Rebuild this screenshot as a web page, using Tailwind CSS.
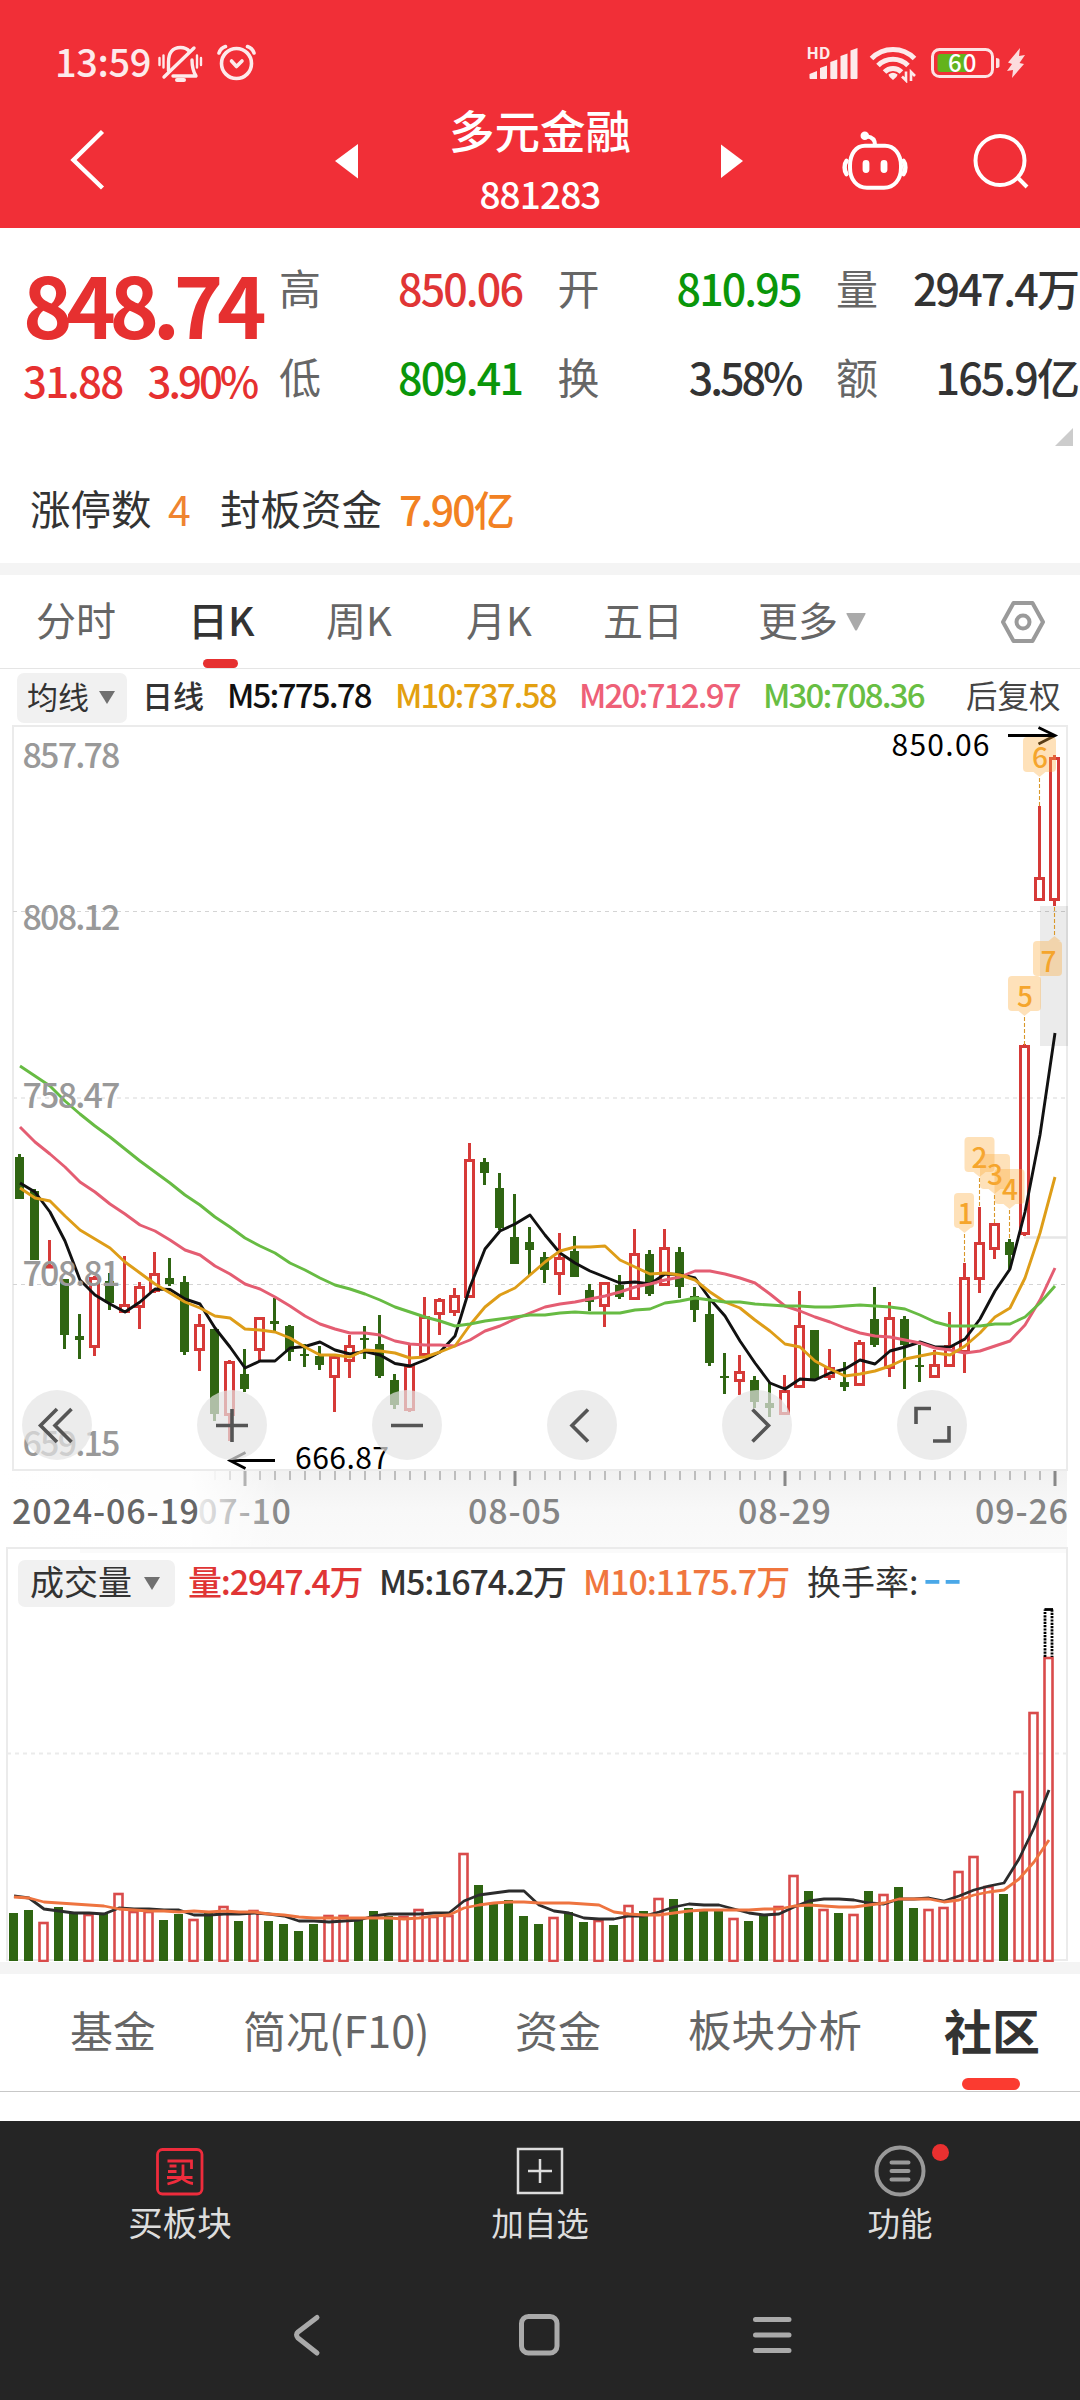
<!DOCTYPE html>
<html lang="zh-CN">
<head>
<meta charset="utf-8">
<title>多元金融 881283</title>
<script src="https://cdn.jsdelivr.net/npm/@tailwindcss/browser@4"></script>
</head>
<body class="w-[1080px] h-[2400px] overflow-hidden bg-white font-['Noto_Sans_CJK_SC',sans-serif] text-[#333] whitespace-nowrap">

<header class="h-[228px] bg-[#f12f37] text-white flex flex-col">
  <div class="h-[100px] pt-[22px] flex items-center">
    <span class="ml-[55px] w-[97px] text-[38px] font-medium leading-none tracking-[-0.400px] opacity-90">13:59</span>
    <svg class="ml-[4px] opacity-90" width="48" height="44" viewBox="156 39 48 44" fill="none" stroke="#fff" stroke-width="3.400" stroke-linecap="round" stroke-linejoin="round">
      <path d="M168.500 70.500V62c0-9 4-14.500 12-14.500 4 0 7 1.500 9 4"/><path d="M192 60c0 7 1.500 12 4 16H173"/><path d="M194 48L164 77"/><path d="M177 80h7" stroke-width="4"/><path d="M159.500 58v7M163.500 55.500v12M197 55.500v12M201 58v7" stroke-width="2.400"/>
    </svg>
    <svg class="ml-[10px] opacity-90" width="44" height="44" viewBox="214 39 44 44" fill="none" stroke="#fff" stroke-width="3.600" stroke-linecap="round" stroke-linejoin="round">
      <circle cx="236.500" cy="63.500" r="15"/><path d="M219 53c1-3 3.500-5.500 6.500-6.500M254 53c-1-3-3.500-5.500-6.500-6.500"/><path d="M231.500 61l5 5.500 5.500-5.500"/>
    </svg>
    <svg class="ml-[542px] opacity-90" width="60" height="44" viewBox="800 39 60 44" fill="#fff">
      <text x="806.500" y="58.500" font-size="15.500" font-weight="700" textLength="24" lengthAdjust="spacingAndGlyphs">HD</text>
      <path d="M809.500 74l7.500-3v8h-6.500q-1 0-1-1zM820 68l7-2.500v12.500q0 1-1 1h-5q-1 0-1-1zM830.300 62l7-2.500v18.500q0 1-1 1h-5q-1 0-1-1zM840.500 56l7-2.500v24.500q0 1-1 1h-5q-1 0-1-1zM850.500 50.500l7-2.500v30q0 1-1 1h-5q-1 0-1-1z"/>
    </svg>
    <svg class="ml-[8px] opacity-90" width="52" height="44" viewBox="868 39 52 44" fill="none" stroke="#fff" stroke-width="5">
      <path d="M871.500 58.500a30 30 0 0 1 43 0M878 65.500a21 21 0 0 1 30 0M884.500 72a12 12 0 0 1 17 0"/><path d="M888.500 74.500q4.500-3.500 9 0q0 2-4.500 5.500q-4.500-3.500-4.500-5.500z" fill="#fff" stroke="none"/><path d="M906 71.500v9l-4-4M911 81v-9l4 4" stroke-width="2.600"/>
    </svg>
    <svg class="ml-[10px]" width="72" height="44" viewBox="930 39 72 44">
      <rect x="932.500" y="49.500" width="60" height="27" rx="7" fill="none" stroke="#fde3e4" stroke-width="3"/><path d="M940.500 54h26v18h-26a3 3 0 0 1-3-3V57a3 3 0 0 1 3-3z" fill="#63b31c"/><path d="M996 58q3.500 0 3.500 2v6q0 2-3.500 2z" fill="#fde3e4"/>
      <text x="948" y="72" font-size="24" font-weight="500" fill="#fff" textLength="28.500">60</text>
    </svg>
    <svg class="ml-[4px]" width="22" height="44" viewBox="1006 39 22 44"><path d="M1020 48l-12 14.500 4 1.500-5 7 6-1-1 8 12-14-4.500-1 5.500-8-6 1z" fill="#fcdcdd"/></svg>
  </div>
  <div class="h-[128px] flex items-start">
    <svg class="ml-[60px] mt-[20px]" width="56" height="80" viewBox="60 120 56 80" fill="none" stroke="#fff" stroke-width="4.400"><path d="M102.500 131.500L73.500 160l29 28"/></svg>
    <svg class="ml-[214px] mt-[20px]" width="32" height="80" viewBox="330 120 32 80" fill="#fff"><path d="M358 144v34.500L335 161z"/></svg>
    <div class="ml-[58px] w-[240px] flex flex-col gap-[12px] text-center">
      <h1 class="h-[56px] leading-[58px] text-[45.500px] font-medium">多元金融</h1>
      <p class="h-[50px] leading-[50px] text-[37px] font-medium tracking-[-0.900px]">881283</p>
    </div>
    <svg class="ml-[56px] mt-[20px]" width="32" height="80" viewBox="716 120 32 80" fill="#fff"><path d="M721 144.500v33.500l22-17z"/></svg>
    <svg class="ml-[90px] mt-[20px]" width="74" height="80" viewBox="838 120 74 80" fill="none" stroke="#fff" stroke-width="4" stroke-linecap="round">
      <path d="M865 145.800h20c9 0 16 8 16 20v2c0 12-7 20-17 20h-17c-10 0-17-8-17-20v-2c0-12 6-20 15-20z"/><path d="M846.500 161c-2.500 3-2.500 10 0 13M903.500 161c2.500 3 2.500 10 0 13" stroke-width="4.500"/><path d="M875 145c0-5.500-2.500-8-8-8.500"/><circle cx="864.800" cy="135.800" r="3" fill="#fff" stroke-width="2.500"/><path d="M866 163.500v6M884 163.500v6" stroke-width="6.800"/>
    </svg>
    <svg class="ml-[56px] mt-[20px]" width="64" height="80" viewBox="968 120 64 80" fill="none" stroke="#fff" stroke-width="4"><circle cx="1000" cy="160.500" r="24.500"/><path d="M1017 177l10 10"/></svg>
  </div>
</header>

<section class="h-[250px] flex">
  <div class="w-[279px] pt-[25px] pl-[23px] text-[#e63030]">
    <p class="h-[100px] leading-[100px] text-[84px] font-bold tracking-[-6.300px]">848.74</p>
    <p class="h-[53px] leading-[53px] text-[42px] font-medium tracking-[-1.800px] flex"><span class="w-[124.500px]">31.88</span><span class="tracking-[-3px]">3.90%</span></p>
  </div>
  <div class="pt-[29px] w-[801px] flex flex-col">
    <div class="grid grid-cols-3 gap-x-[34.500px] gap-y-[29px] text-[42px] leading-[60px]">
      <div class="flex justify-between text-[#666]"><span>高</span><span class="pr-[1px] text-[43px] font-medium tracking-[-1.900px] text-[#e03535]">850.06</span></div>
      <div class="flex justify-between text-[#666]"><span>开</span><span class="pr-[1px] text-[43px] font-medium tracking-[-1.900px] text-[#0a960a]">810.95</span></div>
      <div class="flex justify-between text-[#666]"><span>量</span><span class="pr-[2px] text-[43px] font-medium tracking-[-1.900px] text-[#333]">2947.4万</span></div>
      <div class="flex justify-between text-[#666]"><span>低</span><span class="pr-[1px] text-[43px] font-medium tracking-[-1.900px] text-[#0a960a]">809.41</span></div>
      <div class="flex justify-between text-[#666]"><span>换</span><span class="pr-[1px] text-[43px] font-medium tracking-[-3px] text-[#333]">3.58%</span></div>
      <div class="flex justify-between text-[#666]"><span>额</span><span class="pr-[2px] text-[43px] font-medium tracking-[-1.900px] text-[#333]">165.9亿</span></div>
    </div>
    <svg class="self-end mr-[7px] mt-[22px]" width="18" height="18" fill="#ccc"><path d="M18 0v18H0z"/></svg>
  </div>
</section>
<section class="h-[85px] text-[40.500px] leading-[60px] flex">
  <span class="ml-[30px] w-[121px]">涨停数</span><span class="ml-[17px] w-[23px] text-[41px] text-[#ef8430]">4</span>
  <span class="ml-[29px] w-[162px]">封板资金</span><span class="ml-[17px] text-[41px] font-medium tracking-[-1.900px] text-[#f28122]">7.90亿</span>
</section>
<div class="h-[12px] bg-[#f4f4f4]"></div>

<nav class="h-[94px] pb-[5px] border-b border-[#e5e5e5] flex items-center text-[40px] leading-none text-[#666]">
  <span class="ml-[36px]">分时</span>
  <span class="ml-[72px] w-[66px] relative text-[#333] font-medium">日K<i class="absolute left-[15px] top-[60px] w-[35px] h-[9px] rounded-[5px] bg-[#e63030]"></i></span>
  <span class="ml-[72px] w-[66px]">周K</span>
  <span class="ml-[74px] w-[66px]">月K</span>
  <span class="ml-[71px]">五日</span>
  <span class="ml-[75px]">更多</span>
  <svg class="ml-[8px] mt-[5px]" width="20" height="18" fill="#aaa"><path d="M1 0h18q1 0 .5 1L11 17q-1 1-2 0L.5 1Q0 0 1 0z"/></svg>
  <svg class="ml-[134px] mt-[5px]" width="46" height="46" viewBox="0 0 46 46" fill="none" stroke="#9a9a9a" stroke-width="4" stroke-linejoin="round"><path d="M13.500 4h19L43 23 32.500 42h-19L3 23z"/><circle cx="23" cy="23" r="6.500"/></svg>
</nav>

<div class="h-[56px] pb-[5px] flex items-center text-[31px] leading-none">
  <span class="ml-[17px] mt-[6px] w-[110px] h-[50px] pb-[5px] pl-[10px] rounded-[7px] bg-[#f1f1f1] flex items-center">均线<svg class="ml-[10px] mt-[5px]" width="16" height="13" fill="#707070"><path d="M0 0h16L8 13z"/></svg></span>
  <span class="ml-[15px] w-[85px] font-medium">日线</span>
  <span class="w-[168px] text-[33px] font-medium tracking-[-1.800px] text-[#111]">M5:775.78</span>
  <span class="w-[184px] text-[33px] font-medium tracking-[-1.800px] text-[#e3a010]">M10:737.58</span>
  <span class="w-[184px] text-[33px] font-medium tracking-[-1.800px] text-[#ee6077]">M20:712.97</span>
  <span class="w-[203px] text-[33px] font-medium tracking-[-1.800px] text-[#68be43]">M30:708.36</span>
  <span class="text-[31.500px] text-[#444]">后复权</span>
</div>

<svg id="kline" class="block overflow-visible" width="1080" height="822" viewBox="0 725 1080 822">
  <defs>
    <linearGradient id="axisShade" x1="0" y1="0" x2="0" y2="1"><stop offset="0" stop-color="#f1f1f1"/><stop offset=".5" stop-color="#f8f8f8"/><stop offset="1" stop-color="#fafafa"/></linearGradient>
    <linearGradient id="axisFade" x1="0" y1="0" x2="1" y2="0"><stop offset="0" stop-color="#fff"/><stop offset=".68" stop-color="#fff" stop-opacity=".92"/><stop offset="1" stop-color="#fff" stop-opacity="0"/></linearGradient>
  </defs>
  <rect x="0" y="1471" width="1067" height="76" fill="url(#axisShade)"/>
  <g fill="none" stroke="#ebebeb" stroke-width="2">
    <path d="M13 726H1067V1470H13z"/>
    <path d="M13 1098H1067" stroke-dasharray="4 4"/>
    <path d="M13 911.500H1067M13 1284.500H1067" stroke="#d4d4d4" stroke-width="1" stroke-dasharray="4 4"/>
    <path d="M1024 1237.500H1067" stroke="#e6e6e6" stroke-width="2.500"/>
  </g>
  <g id="ticks"></g>
  <g font-size="34" font-weight="500" fill="#858585">
    <text x="198" y="1523.500" textLength="93">07-10</text><text x="468" y="1523.500" textLength="93">08-05</text><text x="738" y="1523.500" textLength="93">08-29</text><text x="975" y="1523.500" textLength="93">09-26</text>
  </g>
  <rect x="0" y="1471" width="280" height="76" fill="url(#axisFade)"/>
  <text x="12" y="1523.500" font-size="34" fill="#666" font-weight="500" textLength="187">2024-06-19</text>
  <rect x="1040" y="906" width="28" height="140" fill="#000" fill-opacity=".08"/>
  <g id="candles"></g>
  <g id="averages" fill="none" stroke-width="2.900" stroke-linejoin="round"></g>
  <g font-size="34" font-weight="500" fill="#999">
    <text x="22.500" y="767.500" textLength="98">857.78</text><text x="22.500" y="929.500" textLength="98">808.12</text><text x="22.500" y="1107.500" textLength="98">758.47</text><text x="22.500" y="1285.500" textLength="98">708.81</text><text x="22.500" y="1455.500" textLength="98">659.15</text>
  </g>
  <g font-size="30" fill="#000"><text x="891.500" y="755.500" textLength="98">850.06</text><text x="295" y="1468.500" textLength="94">666.87</text></g>
  <g fill="none" stroke="#000" stroke-width="2.800"><path d="M1008 735.500H1055M1038.500 727.500L1055 735.500L1038.500 744M275 1460.500H230M245.500 1452.500L230 1460.500L245.500 1468.500"/></g>
  <g id="badges" font-size="28" font-weight="500" fill="#f5a52c" text-anchor="middle"></g>
  <g fill="#e4e4e4" fill-opacity=".7"><circle cx="57" cy="1425" r="35"/><circle cx="232" cy="1425" r="35"/><circle cx="407" cy="1425" r="35"/><circle cx="582" cy="1425" r="35"/><circle cx="757" cy="1425" r="35"/><circle cx="932" cy="1425" r="35"/></g>
  <g fill="none" stroke="#555" stroke-width="3.600"><path d="M57 1409L40.500 1425.500L57 1442M71.500 1409L55 1425.500L71.500 1442M216 1425.500h32M232 1409v33M391 1425.500h32M588 1409.500L572 1425.500L588 1441.500M752.500 1409.500L768.500 1425.500L752.500 1441.500M931 1408.500H916V1424M949 1426V1441H933"/></g>
</svg>

<section class="grid h-[415px]">
  <svg id="volume" class="[grid-area:1/1]" width="1080" height="415" viewBox="0 1547 1080 415">
    <rect x="80" y="1547" width="987" height="6" fill="#fafafa"/>
    <path d="M7 1548H1067V1960H7z" fill="none" stroke="#ebebeb" stroke-width="2"/>
    <path d="M7 1753.500H1067" stroke="#ebebeb" stroke-width="2" stroke-dasharray="4 4"/>
    <g id="bars"></g>
    <g id="volAverages" fill="none" stroke-width="2.800" stroke-linejoin="round"></g>
    <path d="M1045 1657V1609.500M1052 1609.500V1657" fill="none" stroke="#000" stroke-width="2.800" stroke-dasharray="2.200 1.100"/><path d="M1044.500 1609.500H1053" stroke="#000" stroke-width="2.800"/>
  </svg>
  <div class="[grid-area:1/1] h-[72px] pb-[5px] flex items-center text-[34px] leading-none">
    <span class="ml-[18px] mt-[6px] w-[157px] h-[47px] pb-[6px] pl-[12px] rounded-[7px] bg-[#f1f1f1] flex items-center">成交量<svg class="ml-[12px] mt-[6px]" width="16" height="13" fill="#707070"><path d="M0 0h16L8 13z"/></svg></span>
    <span class="ml-[13px] w-[191px] font-medium tracking-[-1.200px] text-[#e03535]">量:2947.4万</span>
    <span class="w-[204px] font-medium tracking-[-1.200px]">M5:1674.2万</span>
    <span class="w-[224px] font-medium tracking-[-1.100px] text-[#f0763e]">M10:1175.7万</span>
    <span class="w-[116px]">换手率:</span>
    <span class="mb-[14px] text-[54px] tracking-[1.500px] text-[#4aa8e8]">--</span>
  </div>
</section>

<div class="h-[12px] bg-[#f4f4f4]"></div>
<nav class="h-[118px] pb-[7px] border-b border-[#c8c8c8] flex items-center text-[43px] leading-none text-[#666]">
  <span class="ml-[70px]">基金</span>
  <span class="ml-[87px] w-[185px]">简况(F10)</span>
  <span class="ml-[87px]">资金</span>
  <span class="ml-[87px] w-[174px] text-[43.500px]">板块分析</span>
  <span class="ml-[82px] relative text-[48px] font-bold text-[#333]">社区<i class="absolute left-[18px] top-[73px] w-[58px] h-[12px] rounded-[6px] bg-[#fb3b30]"></i></span>
</nav>
<div class="h-[29px]"></div>

<footer class="h-[279px] bg-[#252525] text-[#ddd]">
  <div class="h-[139px] pt-[19px] grid grid-cols-3 justify-items-center content-start leading-[40px]">
    <div class="flex flex-col items-center">
      <svg width="60" height="60" viewBox="150 2140 60 60" fill="none" stroke="#ee2c3c" stroke-width="2.800"><rect x="157.500" y="2149.500" width="44.500" height="44.500" rx="5"/><path d="M167.500 2161h24v8M169.500 2166h7M168 2171.500h8.500M167 2177.500h25.500M183 2164.500v10c0 4-5 7-15.500 9.500M182 2178c3 3 6 5 11 5.500"/></svg>
      <span class="mt-px text-[34.500px]">买板块</span>
    </div>
    <div class="flex flex-col items-center">
      <svg width="60" height="60" viewBox="510 2140 60 60" fill="none" stroke="#ddd" stroke-width="2.500"><rect x="518" y="2149" width="44" height="44"/><path d="M540 2159v24M528 2171h24"/></svg>
      <span class="mt-[2px] text-[32.500px]">加自选</span>
    </div>
    <div class="flex flex-col items-center">
      <svg width="100" height="60" viewBox="850 2140 100 60" fill="none" stroke="#999" stroke-width="4" stroke-linecap="round"><circle cx="900" cy="2171" r="23.500"/><path d="M891.500 2162.500h17M891.500 2171h17M891.500 2179.500h17"/><circle cx="940.500" cy="2152.500" r="8.500" fill="#ea3030" stroke="none"/></svg>
      <span class="mt-[2px] text-[32.500px]">功能</span>
    </div>
  </div>
  <div class="h-[140px] pl-[282px] pt-[45px] flex">
    <svg width="524" height="60" viewBox="282 2305 524 60" fill="none" stroke="#aaa" stroke-width="5" stroke-linecap="round" stroke-linejoin="round"><path d="M317 2317.500L298 2332q-3 2.500 0 6L317 2353"/><rect x="521.500" y="2316.500" width="35.500" height="36.500" rx="7"/><path d="M755.500 2319.500h33.500M755.500 2335h33.500M755.500 2350.500h33.500"/></svg>
  </div>
</footer>

<script>
const NS = 'http://www.w3.org/2000/svg';
function add(id, tag, attrs, text) {
  const el = document.createElementNS(NS, tag);
  for (const k in attrs) el.setAttribute(k, attrs[k]);
  if (text !== undefined) el.textContent = text;
  document.getElementById(id).appendChild(el);
}
const GREEN = '#2f6512', RED = '#d63a38';

// colour, high, body top, body bottom, low
const candles = `G 1154 1157 1199 1199|G 1189 1191 1260 1260|R 1240 1265 1268 1268|G 1279 1279 1335 1349|G 1314 1336 1340 1359|R 1276 1277 1348 1356|G 1273 1281 1303 1310|R 1256 1304 1313 1313|R 1282 1286 1308 1329|R 1252 1273 1292 1293|G 1258 1278 1284 1286|G 1276 1282 1352 1355|R 1314 1324 1351 1371|G 1329 1329 1414 1421|R 1360 1361 1416 1441|G 1349 1374 1389 1392|R 1317 1317 1351 1362|G 1298 1321 1324 1331|G 1325 1326 1352 1361|G 1344 1354 1356 1367|G 1346 1356 1365 1370|R 1355 1356 1378 1412|R 1335 1345 1362 1378|G 1326 1338 1340 1359|G 1315 1344 1376 1378|G 1374 1380 1405 1409|R 1344 1365 1411 1412|R 1297 1316 1356 1356|R 1298 1299 1315 1335|R 1288 1295 1313 1316|R 1143 1159 1298 1298|G 1158 1162 1173 1185|G 1173 1188 1228 1230|G 1194 1237 1264 1264|G 1227 1242 1250 1275|G 1252 1257 1270 1283|R 1233 1257 1275 1295|G 1236 1251 1277 1277|G 1284 1290 1302 1311|R 1282 1282 1307 1327|G 1275 1285 1297 1299|R 1229 1253 1300 1300|G 1250 1254 1294 1296|R 1229 1247 1286 1286|G 1247 1252 1287 1298|G 1287 1296 1310 1322|G 1300 1314 1363 1366|G 1353 1376 1378 1394|R 1355 1371 1382 1395|G 1376 1380 1402 1408|G 1382 1403 1408 1417|R 1375 1390 1415 1415|R 1291 1325 1388 1388|G 1330 1330 1379 1379|R 1349 1367 1378 1380|G 1362 1382 1387 1391|R 1340 1342 1386 1386|G 1287 1319 1345 1347|R 1302 1317 1369 1377|G 1316 1319 1345 1389|G 1345 1365 1367 1382|R 1350 1364 1378 1378|R 1312 1345 1367 1367|R 1263 1277 1353 1373|R 1207 1242 1280 1293|R 1223 1223 1250 1259|G 1239 1242 1255 1269|R 1044 1045 1235 1236|R 806 877 901 901|R 755 757 901 906`.split('|');
candles.forEach((row, i) => {
  const [c, ...v] = row.split(' ');
  const [hi, top, bot, lo] = v.map(Number), cx = 19.5 + 15 * i;
  if (c === 'G') {
    add('candles', 'rect', {x: cx - 1.5, y: hi, width: 3, height: lo - hi, fill: GREEN});
    add('candles', 'rect', {x: cx - 4.5, y: top, width: 9, height: bot - top, fill: GREEN});
  } else {
    if (top > hi) add('candles', 'rect', {x: cx - 1.5, y: hi, width: 3, height: top - hi + 1, fill: RED});
    if (lo > bot) add('candles', 'rect', {x: cx - 1.5, y: bot - 1, width: 3, height: lo - bot + 1, fill: RED});
    add('candles', 'rect', {x: cx - 4, y: top + 1.5, width: 8, height: Math.max(bot - top - 3, .5), fill: 'none', stroke: RED, 'stroke-width': 3});
  }
});

function line(id, x0, ys, color) {
  add(id, 'polyline', {points: ys.split(' ').map((y, i) => (x0 + 15 * i) + ',' + y).join(' '), stroke: color});
}
line('averages', 20, '1183 1192 1212 1241 1280 1295 1304 1312 1302 1289 1289.5 1299 1304 1328 1347 1368 1361 1361 1348 1346.5 1342 1350 1354 1351.5 1355 1363.5 1366 1360 1352 1336 1287 1249 1231 1224 1215 1235 1253 1263 1271 1277 1283 1282 1284 1274 1274.5 1278 1299 1316 1341 1363 1383 1389 1379 1380 1373 1369 1360 1364 1351 1347 1342 1347 1347 1339 1319 1291 1269 1212 1135 1033', '#111');
line('averages', 20, '1127 1142 1154 1167 1182 1192 1204 1214 1225 1231 1240 1250 1255 1266 1274 1284 1289 1297 1306 1316 1324 1329 1333 1333 1335 1341 1344 1345 1345 1346 1340 1331 1326 1319 1313 1307 1304 1302 1299 1296 1292 1287 1284 1280 1277 1271 1271 1274 1278 1283 1294 1306 1311 1317 1322 1328 1333 1336 1337 1340 1343 1348 1350 1353 1351 1346 1341 1325 1300 1268', '#e45d72');
line('averages', 20, '1188 1198 1201 1216 1230 1239 1248 1262 1273 1284 1293 1302 1308 1316 1318 1329 1330 1332 1338 1347 1355 1355 1357 1350 1351 1353 1358 1357 1352 1346 1325 1307 1295 1288 1275 1262 1251 1247 1247 1246 1260 1267 1274 1273 1275 1280 1292 1302 1308 1320 1331 1344 1347 1361 1369 1376 1374 1371 1366 1359 1356 1353 1355 1346 1333 1317 1308 1278 1233 1177', '#de9d18');
line('averages', 20, '1066 1076 1086 1101 1114 1126 1137 1149 1161 1172 1183 1195 1205 1217 1227 1238 1246 1253 1263 1270 1278 1285 1289 1294 1300 1307 1312 1317 1321 1326 1324 1321 1319 1317 1315 1315 1313 1312 1313 1313 1313 1310 1309 1303 1301 1298 1300 1302 1302 1304 1305 1306 1306 1307 1307 1306 1305 1306 1307 1309 1315 1322 1326 1326 1326 1324 1324 1317 1303 1286', '#67bb43');

for (let i = 0; i < 70; i++) {
  const major = [15, 33, 51, 69].includes(i);
  add('ticks', 'rect', {x: 20 + 15 * i - (major ? 1.5 : 1), y: 1471, width: major ? 3 : 2, height: major ? 15 : 9, fill: major ? '#888' : '#bdbdbd', opacity: i < 13 ? 0 : i === 13 ? .4 : 1});
}

// label, box left, box right, box top, stem x, stem end, text x
[[1, 954, 974, 1193, 964.5, 1263, 965.5], [2, 964.5, 994.5, 1137, 979.5, 1207, 979.5], [3, 980, 1010, 1154, 994.5, 1223, 995], [4, 994.5, 1024.5, 1169, 1009.5, 1239, 1010], [5, 1008, 1041, 976, 1024.5, 1045, 1025], [6, 1023, 1056, 737, 1039.5, 806, 1040], [7, 1033, 1062, 941, 1054.5, 906, 1048.5]].forEach(([n, l, r, t, sx, se, tx]) => {
  const b = t + 35, up = se < t, y0 = up ? t : b, d = up ? -5 : 5;
  add('badges', 'rect', {x: l, y: t, width: r - l, height: 35, rx: 4, fill: '#fbac3c', 'fill-opacity': .36});
  add('badges', 'path', {d: `M${sx - 6} ${y0}L${sx} ${y0 + d}L${sx + 6} ${y0}z`, fill: '#fbac3c', 'fill-opacity': .36});
  add('badges', 'path', {d: `M${sx} ${y0 + d + (up ? -1 : 1)}V${se}`, stroke: '#d9982a', 'stroke-width': 1.1, 'stroke-dasharray': '4 2'});
  add('badges', 'text', {x: tx, y: t + 31}, n);
});

const bars = 'G1913 G1910 R1922 G1907 G1913 R1914 G1914 R1893 R1911 R1911 G1920 G1914 R1919 G1913 R1906 G1921 R1910 G1921 G1924 G1931 G1924 R1915 R1915 G1920 G1911 G1916 R1916 R1909 R1916 R1915 R1853 G1885 G1903 G1900 G1916 G1924 R1917 G1912 G1922 R1920 G1925 R1905 G1911 R1898 G1899 G1908 G1911 G1911 R1918 G1921 G1915 R1906 R1875 G1891 R1909 G1913 R1914 G1891 R1894 G1887 G1908 R1909 R1907 R1871 R1856 R1886 G1894 R1791 R1712 R1657'.split(' ');
bars.forEach((b, i) => {
  const y = +b.slice(1), cx = 13.5 + 15 * i;
  if (b[0] === 'G') add('bars', 'rect', {x: cx - 4.5, y, width: 9, height: 1961 - y, fill: GREEN});
  else add('bars', 'rect', {x: cx - 4, y: y + 1, width: 8, height: 1960 - y, fill: '#fff', stroke: '#d94b4b', 'stroke-width': 2.6});
});
line('volAverages', 14, '1896 1898 1909 1911 1913 1913 1914 1908 1909 1909 1910 1910 1915 1915 1914 1914 1913 1914 1916 1921 1921 1922 1921 1920 1916 1914 1914 1914 1913 1913 1901 1895 1893 1891 1891 1905 1911 1913 1918 1919 1919 1916 1916 1912 1907 1904 1905 1905 1909 1913 1915 1914 1907 1901 1899 1899 1900 1903 1904 1899 1899 1898 1901 1896 1890 1886 1883 1859 1828 1790', '#2c2c2c');
line('volAverages', 14, '1897 1898 1902 1903 1904 1905 1906 1909 1910 1911 1911 1912 1911 1912 1911 1912 1912 1914 1915 1917 1918 1918 1918 1918 1918 1918 1919 1918 1916 1915 1908 1905 1903 1902 1902 1903 1903 1903 1904 1905 1912 1914 1915 1915 1913 1911 1910 1910 1910 1910 1909 1909 1906 1905 1906 1907 1907 1905 1903 1899 1899 1899 1902 1900 1895 1892 1890 1879 1862 1840', '#ee7440');
</script>
</body>
</html>
